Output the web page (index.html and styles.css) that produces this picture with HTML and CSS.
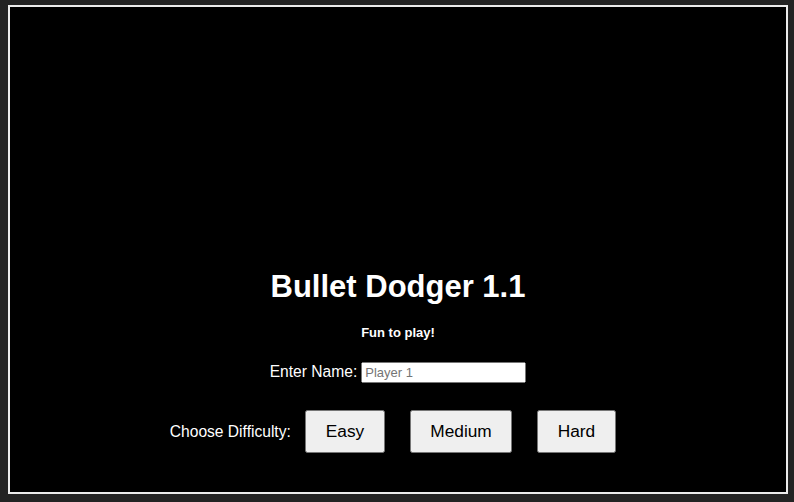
FILE: index.html
```html
<!DOCTYPE html>
<html>
<head>
<meta charset="utf-8">
<link rel="stylesheet" href="styles.css">
</head>
<body>
<div class="frame">
  <div class="menu">
    <h1 class="title">Bullet Dodger 1.1</h1>
    <p class="tagline">Fun to play!</p>
    <div class="name-row">
      <label class="label" for="name">Enter Name:</label>
      <input class="name-input" id="name" type="text" placeholder="Player 1">
    </div>
    <div class="diff-row">
      <span class="label">Choose Difficulty:</span>
      <button class="diff-btn">Easy</button>
      <button class="diff-btn">Medium</button>
      <button class="diff-btn">Hard</button>
    </div>
  </div>
</div>
</body>
</html>
```
FILE: styles.css
```css
html, body {
  margin: 0;
  padding: 0;
  background: #232323;
  font-family: "Liberation Sans", Arial, sans-serif;
}

.frame {
  margin: 5px 6px 8px 8px;
  width: 776px;
  height: 485px;
  border: 2px solid #ececec;
  background: #000;
  color: #fff;
}

.menu {
  display: flex;
  flex-direction: column;
  align-items: center;
  padding-top: 262px;
}

.title {
  margin: 0;
  font-size: 31px;
  font-weight: bold;
  line-height: 36px;
}

.tagline {
  margin: 20px 0 0;
  font-size: 13px;
  font-weight: bold;
  line-height: 15px;
}

.name-row {
  margin-top: 22px;
  display: flex;
  align-items: baseline;
  gap: 4px;
}

.label {
  font-size: 15.6px;
}

.name-input {
  width: 165px;
  box-sizing: border-box;
  font-family: "Liberation Sans", Arial, sans-serif;
  font-size: 13px;
}

.diff-row {
  margin-top: 27px;
  display: flex;
  align-items: center;
  gap: 4px;
}

.diff-btn {
  margin: 0 10.5px;
  padding: 9px 18.5px;
  font-family: "Liberation Sans", Arial, sans-serif;
  font-size: 17.3px;
  color: #000;
}
```
